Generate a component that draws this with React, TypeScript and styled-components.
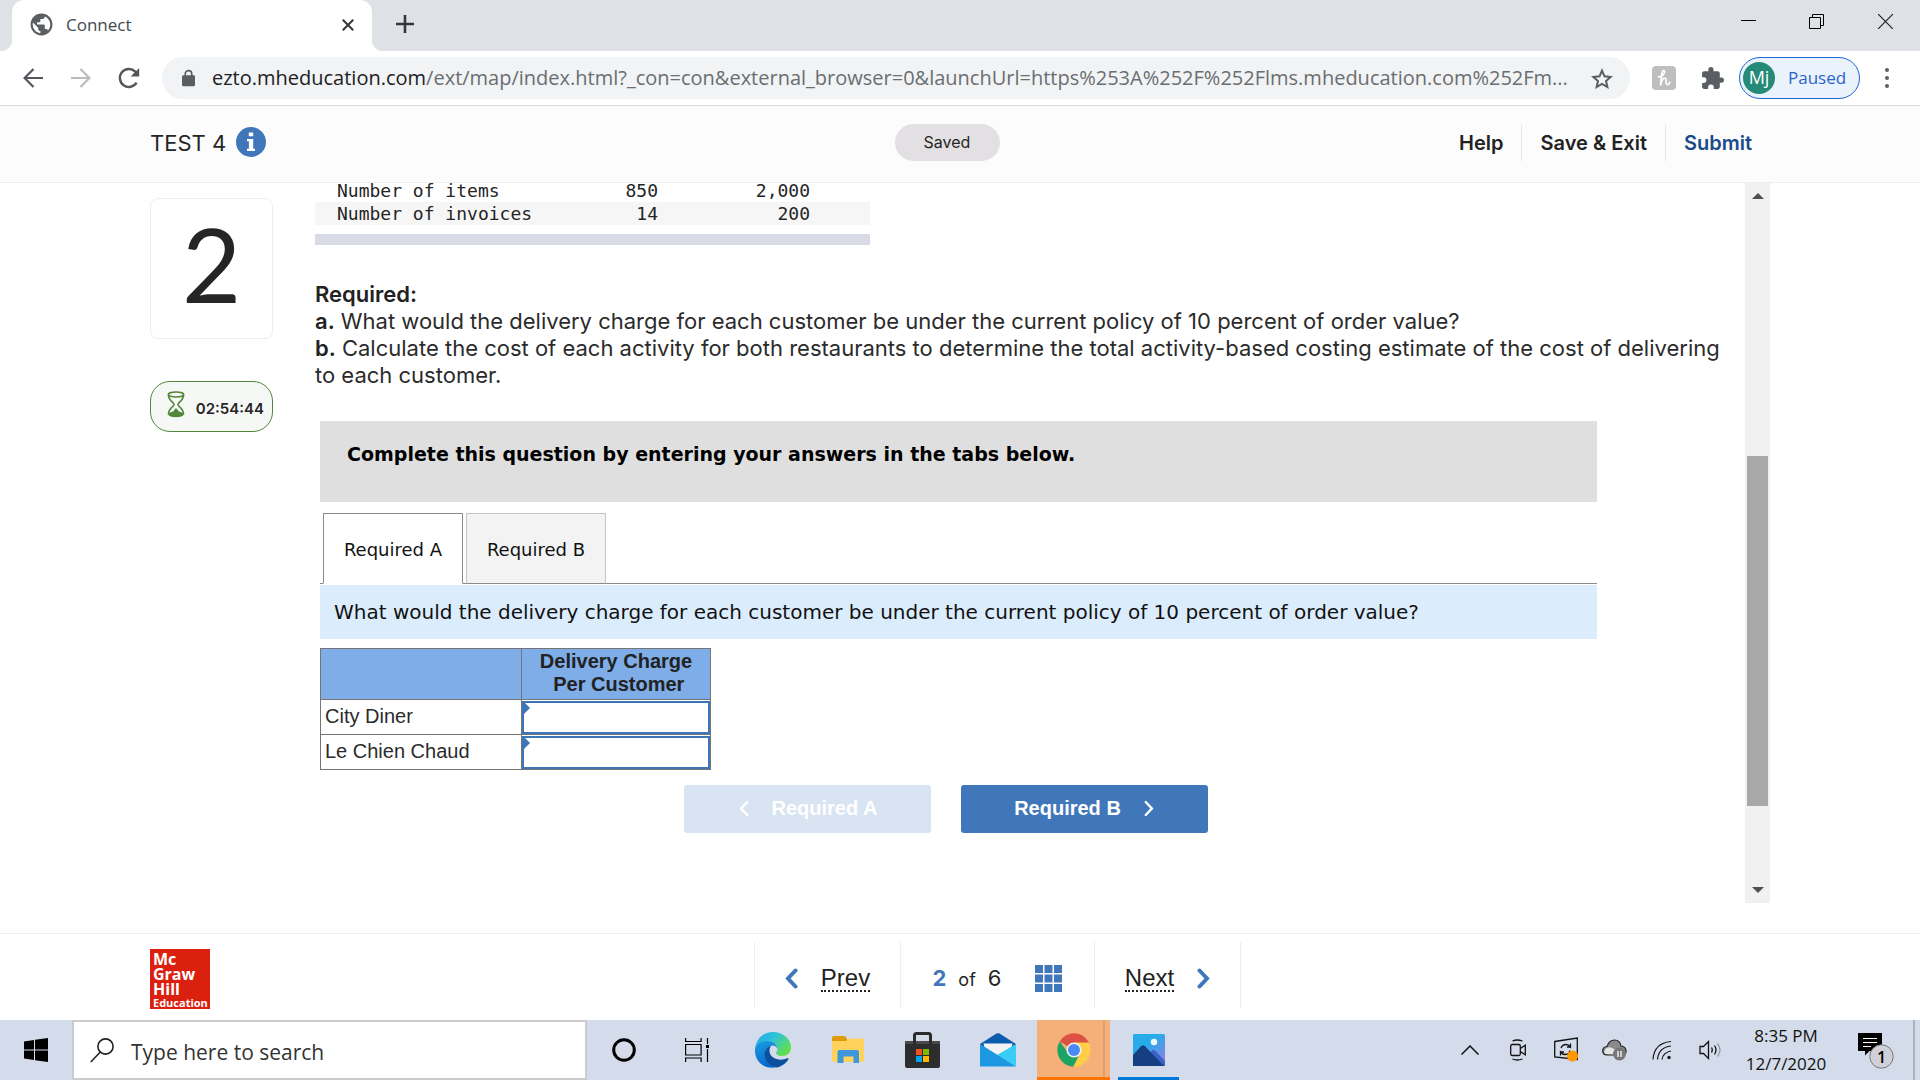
import React, { useState } from 'react';
import styled, { createGlobalStyle } from 'styled-components';

const segoe = '"Open Sans", "Noto Sans", sans-serif';
const proxima = 'Inter, "Open Sans", sans-serif';
const arial = '"Liberation Sans", Arial, sans-serif';
const verdana = '"DejaVu Sans", Verdana, sans-serif';
const mono = '"DejaVu Sans Mono", monospace';

const Global = createGlobalStyle`
  *, *::before, *::after { box-sizing: border-box; }
  body { margin: 0; background: #fff; color: #252525; font-family: ${proxima}; }
  button { font: inherit; color: inherit; background: none; border: 0; padding: 0; cursor: pointer; }
  a { color: inherit; text-decoration: none; }
  svg { display: block; flex: none; }
  h1, h2, p, dl, dd { margin: 0; }
`;

const Page = styled.div`
  display: flex;
  flex-direction: column;
  height: 100vh;
  overflow: hidden;
`;

/* ---------- browser chrome ---------- */

const TabStrip = styled.div`
  display: flex;
  flex: none;
  height: 51px;
  padding-left: 12px;
  background: #dee1e6;
`;

const BrowserTab = styled.div`
  position: relative;
  display: flex;
  align-items: center;
  width: 360px;
  padding: 0 16px 2px 18px;
  background: #fff;
  border-radius: 12px 12px 0 0;
  font: 17px/24px ${segoe};
  color: #45494d;
  &::before, &::after {
    content: '';
    position: absolute;
    bottom: 0;
    width: 12px;
    height: 12px;
  }
  &::before { right: 100%; background: radial-gradient(circle at 0 0, #dee1e6 12px, #fff 13px); }
  &::after { left: 100%; background: radial-gradient(circle at 100% 0, #dee1e6 12px, #fff 13px); }
`;

const TabTitle = styled.span`
  flex: 1;
  margin-left: 13px;
`;

const IconButton = styled.button<{ $w?: number }>`
  display: flex;
  flex: none;
  align-items: center;
  justify-content: center;
  width: ${(p) => p.$w ?? 48}px;
  height: 42px;
`;

const NewTab = styled(IconButton)`
  margin-left: 9px;
  height: 48px;
`;

const WindowControls = styled.div`
  display: flex;
  margin-left: auto;
`;

const Toolbar = styled.div`
  display: flex;
  flex: none;
  align-items: center;
  height: 55px;
  padding: 0 9px;
  border-bottom: 1px solid #d8dadd;
`;

const Omnibox = styled.div`
  display: flex;
  flex: 1;
  min-width: 0;
  align-items: center;
  height: 42px;
  margin: 0 11px 0 9px;
  padding: 0 4px 0 20px;
  background: #f1f3f4;
  border-radius: 21px;
`;

const Url = styled.div`
  flex: 1;
  min-width: 0;
  margin-left: 17px;
  white-space: nowrap;
  font: 20px/28px ${segoe};
  color: #6a6e72;
  b { font-weight: 400; color: #202124; }
`;

const Profile = styled.button`
  display: flex;
  align-items: center;
  width: 121px;
  height: 42px;
  margin: 0 3px 0 2px;
  padding: 0 3px;
  background: #eaf2fb;
  border: 1px solid #1f66d8;
  border-radius: 21px;
  font: 17px/24px ${segoe};
  color: #2a62cf;
`;

const Avatar = styled.span`
  width: 32px;
  height: 32px;
  margin-right: 13px;
  background: #268a79;
  border-radius: 50%;
  font: 18px/31px ${segoe};
  color: #fff;
`;

/* ---------- assessment header ---------- */

const Header = styled.header`
  display: grid;
  grid-template-columns: 1fr auto 1fr;
  flex: none;
  align-items: center;
  height: 77px;
  padding: 0 150px 4px;
  background: #fcfcfc;
  border-bottom: 1px solid #eee;
`;

const TestTitle = styled.div`
  display: flex;
  align-items: center;
  gap: 10px;
  h1 { padding-top: 1px; font: 400 22px/30px ${proxima}; color: #252525; }
`;

const Saved = styled.div`
  width: 105px;
  margin-right: 26px;
  background: #e2e0e2;
  border-radius: 19px;
  text-align: center;
  font: 16px/37px ${proxima};
`;

const HeaderNav = styled.nav`
  display: flex;
  justify-content: flex-end;
`;

const HeaderLink = styled.a<{ $primary?: boolean }>`
  padding: 1px 18px 0;
  border-left: 1px solid #e6e6e6;
  font: 600 20px/36px ${proxima};
  color: ${(p) => (p.$primary ? '#1b4a8a' : '#222')};
  &:first-child { border-left: 0; }
`;

/* ---------- question area ---------- */

const Main = styled.main`
  display: flex;
  flex: 1;
  min-height: 0;
  margin: 0 150px 30px;
`;

const Sidebar = styled.aside`
  flex: none;
  width: 123px;
  margin-right: 42px;
  padding-top: 15px;
`;

const QuestionNumber = styled.h2`
  height: 141px;
  border: 1px solid #eee;
  border-radius: 8px;
  text-align: center;
  font: 400 102px/130px Lato, sans-serif;
  color: #252525;
`;

const Timer = styled.div`
  display: flex;
  align-items: center;
  justify-content: space-between;
  height: 51px;
  margin-top: 42px;
  padding: 0 8px 0 16px;
  background: #f6f8f6;
  border: 1px solid #53863d;
  border-radius: 20px;
  font: 600 15px/24px ${proxima};
  svg { margin-bottom: 5px; }
  span { padding-top: 4px; }
`;

const Question = styled.section`
  flex: 1;
  min-width: 0;
  overflow: hidden;
`;

const DataTable = styled.table`
  width: 555px;
  margin-top: -4px;
  border-collapse: collapse;
  font: 18px/23px ${mono};
  th, td { padding: 0; font-weight: 400; text-align: right; }
  th { width: 240px; padding-left: 22px; text-align: left; }
  td:nth-child(2) { width: 103px; }
  td:nth-child(3) { width: 152px; }
  tr:nth-child(2) { background: #f6f6f6; }
`;

const TableFoot = styled.div`
  width: 555px;
  height: 11px;
  margin-top: 9px;
  background: #d8dbe6;
`;

const Prompt = styled.div`
  margin-top: 36px;
  padding-right: 14px;
  font: 22px/27px ${proxima};
  color: #2b2b2b;
  b { font-weight: 600; color: #222; }
`;

const Worksheet = styled.div`
  margin: 32px 148px 0 5px;
`;

const Instruction = styled.p`
  height: 81px;
  padding: 20px 27px;
  background: #dfdfdf;
  font: bold 19px/27px ${verdana};
  color: #000;
`;

const Tabs = styled.div`
  display: flex;
  gap: 3px;
  margin-top: 11px;
  padding-left: 3px;
  border-bottom: 1px solid #8a8a8a;
`;

const Tab = styled.button<{ $active: boolean }>`
  width: 140px;
  height: 71px;
  margin-bottom: -1px;
  padding-top: 2px;
  background: ${(p) => (p.$active ? '#fff' : '#f3f3f3')};
  border: 1px solid ${(p) => (p.$active ? '#8a8a8a' : '#c4c4c4')};
  border-bottom-color: ${(p) => (p.$active ? '#fff' : '#8a8a8a')};
  font: 18px/24px ${verdana};
  color: #111;
`;

const TabPrompt = styled.p`
  margin-top: 1px;
  padding: 14px 16px 13px 14px;
  background: #dbedfc;
  font: 20px/27px ${verdana};
  color: #111;
`;

const AnswerTable = styled.table`
  margin-top: 9px;
  border-collapse: collapse;
  font: 20px/23px ${arial};
  color: #2b2b2b;
  th, td { height: 35px; padding: 0 4px; border: 1px solid #757575; }
  th { font-weight: 400; text-align: left; }
  thead th {
    height: 51px;
    padding: 0 0 3px;
    background: #7eade8;
    text-align: center;
    font-weight: 700;
    color: #222;
  }
  th:first-child { width: 201px; }
  th:last-child { width: 189px; }
  tbody th:first-child { padding-bottom: 1px; width: 201px; }
  td { padding: 0; }
`;

const Cell = styled.label`
  position: relative;
  display: block;
  &::before {
    content: '';
    position: absolute;
    left: 2px;
    top: 1px;
    border: 6px solid transparent;
    border-left-color: #3c75b8;
    border-right-width: 0;
  }
`;

const CellInput = styled.input`
  display: block;
  width: 100%;
  height: 33px;
  padding: 0 8px;
  background: #fff;
  border: 2px solid #3c75b8;
  outline: 0;
  font: 20px/24px ${arial};
`;

const StepButtons = styled.div`
  display: flex;
  justify-content: center;
  gap: 30px;
  margin-top: 15px;
  padding-right: 25px;
`;

const StepButton = styled.button`
  display: flex;
  align-items: center;
  justify-content: center;
  gap: 22px;
  width: 247px;
  height: 48px;
  padding-bottom: 2px;
  background: #3f77ba;
  border-radius: 3px;
  font: bold 20px/24px ${arial};
  color: #fff;
  &:disabled { background: #d8e4f1; cursor: default; }
`;

const ScrollBar = styled.div`
  display: flex;
  flex: none;
  flex-direction: column;
  align-items: center;
  justify-content: space-between;
  width: 25px;
  padding: 10px 0;
  background: #f1f1f1;
`;

const ScrollTrack = styled.div`
  display: flex;
  flex: 1;
  flex-direction: column;
  padding: 257px 0 81px;
`;

const ScrollThumb = styled.div`
  flex: 1;
  width: 21px;
  background: #a8a8a8;
`;

/* ---------- footer ---------- */

const Footer = styled.footer`
  display: flex;
  flex: none;
  height: 87px;
  padding: 0 150px;
  border-top: 1px solid #eee;
`;

const Brand = styled.div`
  width: 60px;
  height: 60px;
  margin: 15px 544px 0 0;
  padding: 3px 0 0 3px;
  background: #dc2010;
  font: bold 16px/15px ${segoe};
  color: #fff;
  span { display: block; }
  small { display: block; font: bold 11px/11px ${segoe}; }
`;

const PagerCell = styled.div<{ $w: number; $last?: boolean }>`
  display: flex;
  align-items: center;
  justify-content: center;
  width: ${(p) => p.$w}px;
  height: 66px;
  margin-top: 8px;
  padding-top: 6px;
  border-left: 1px solid #eee;
  border-right: ${(p) => (p.$last ? 1 : 0)}px solid #eee;
`;

const PagerLink = styled.a`
  display: flex;
  align-items: center;
  gap: 23px;
  font: 24px/25px ${arial};
  color: #222;
  span { padding-top: 1px; border-bottom: 2px dotted #222; }
`;

const Count = styled.div`
  display: flex;
  align-items: baseline;
  gap: 12px;
  margin-right: 34px;
  padding-top: 1px;
  font: 22px/28px ${proxima};
  b { color: #3f77ba; }
  span { font-size: 18px; }
`;

/* ---------- taskbar ---------- */

const Taskbar = styled.div`
  display: flex;
  flex: none;
  align-items: center;
  height: 60px;
  background: #d4dbea;
`;

const Search = styled.label`
  display: flex;
  align-items: center;
  gap: 17px;
  width: 515px;
  height: 60px;
  padding-left: 16px;
  background: #fff;
  border: 2px solid #ccc;
`;

const SearchInput = styled.input`
  flex: 1;
  min-width: 0;
  padding: 3px 0 0;
  background: none;
  border: 0;
  outline: 0;
  font: 21px/28px ${segoe};
  &::placeholder { color: #333; opacity: 1; }
`;

const AppButton = styled.button<{ $w?: number; $tone?: 'hot' | 'open' }>`
  display: flex;
  flex: none;
  align-items: center;
  justify-content: center;
  width: ${(p) => (p.$tone === 'hot' ? 73 : p.$tone === 'open' ? 61 : p.$w ?? 75)}px;
  height: 60px;
  margin: ${(p) => (p.$tone === 'open' ? '0 7px 0 8px' : p.$tone === 'hot' ? '0 0 0 2px' : '0')};
  padding-top: 3px;
  background: ${(p) => (p.$tone === 'hot' ? '#f5b07a' : 'none')};
  border-bottom: 3px solid ${(p) => (p.$tone === 'hot' ? '#ff7300' : p.$tone === 'open' ? '#0078d7' : 'transparent')};
  box-shadow: ${(p) => (p.$tone === 'hot' ? 'inset -5px 0 #f5b07a, inset -7px 0 #e09f70' : 'none')};
`;

const Tray = styled.div`
  display: flex;
  align-items: center;
  height: 60px;
  margin-left: auto;
`;

const Clock = styled.time`
  width: 104px;
  text-align: center;
  font: 17px/28px ${segoe};
  color: #111;
  span { display: block; }
`;

const ShowDesktop = styled.div`
  width: 7px;
  height: 60px;
  border-left: 2px solid #aab1bf;
`;

const Chevron = ({ left, w = 13, h = 21, color = '#3f77ba', sw = 4 }: { left?: boolean; w?: number; h?: number; color?: string; sw?: number }) => (
  <svg width={w} height={h} viewBox="0 0 13 21" fill="none" stroke={color} strokeWidth={sw} strokeLinecap="round">
    <path d={left ? 'M10.500 2.500L3 10.500l7.500 8' : 'M2.500 2.500L10 10.500l-7.500 8'} />
  </svg>
);

const Globe = () => (
  <svg width="23" height="23" viewBox="1.500 1.500 21 21">
    <path fill="#5a5e62" d="M12 2C6.480 2 2 6.480 2 12s4.480 10 10 10 10-4.480 10-10S17.520 2 12 2zm-1 17.930c-3.950-.49-7-3.850-7-7.930 0-.62.08-1.210.21-1.790L9 15v1c0 1.100.9 2 2 2v1.930zm6.900-2.540c-.26-.81-1-1.390-1.900-1.390h-1v-3c0-.55-.45-1-1-1H8v-2h2c.55 0 1-.45 1-1V7h2c1.100 0 2-.9 2-2v-.41c2.930 1.190 5 4.060 5 7.410 0 2.080-.8 3.970-2.100 5.390z" />
  </svg>
);

export default function App() {
  const [tab, setTab] = useState<'A' | 'B'>('A');
  return (
    <Page>
      <Global />
      <TabStrip>
        <BrowserTab>
          <Globe />
          <TabTitle>Connect</TabTitle>
          <IconButton $w={16} aria-label="Close tab">
            <svg width="12" height="12" viewBox="0 0 12 12" stroke="#33373a" strokeWidth="2"><path d="M.8.8l10.400 10.400M11.200.8L.8 11.200" /></svg>
          </IconButton>
        </BrowserTab>
        <NewTab aria-label="New tab">
          <svg width="18" height="18" viewBox="0 0 18 18" stroke="#33373a" strokeWidth="2.600"><path d="M9 0v18M0 9h18" /></svg>
        </NewTab>
        <WindowControls>
          <IconButton $w={68} aria-label="Minimize">
            <svg width="15" height="15" viewBox="0 0 15 15"><path d="M0 6.500h15" stroke="#000" /></svg>
          </IconButton>
          <IconButton $w={68} aria-label="Restore">
            <svg width="15" height="15" viewBox="0 0 15 15" fill="none" stroke="#000"><path d="M.5 3.500h11v11H.5zM3.500 3.500v-3h11v11h-3" /></svg>
          </IconButton>
          <IconButton $w={70} aria-label="Close">
            <svg width="15" height="15" viewBox="0 0 15 15" stroke="#222" strokeWidth="1.200"><path d="M0 0l15 15M15 0L0 15" /></svg>
          </IconButton>
        </WindowControls>
      </TabStrip>

      <Toolbar>
        <IconButton aria-label="Back">
          <svg width="20" height="20" viewBox="0 0 20 20" fill="none" stroke="#54585c" strokeWidth="2.200"><path d="M20 10H2M10.500 1L1.600 10l8.900 9" /></svg>
        </IconButton>
        <IconButton aria-label="Forward">
          <svg width="20" height="20" viewBox="0 0 20 20" fill="none" stroke="#babcbe" strokeWidth="2.200"><path d="M0 10h18M9.500 1l8.900 9-8.900 9" /></svg>
        </IconButton>
        <IconButton aria-label="Reload">
          <svg width="22" height="22" viewBox="0 0 22 22" fill="none" stroke="#54585c" strokeWidth="2.400">
            <path d="M18.600 15.600A9 9 0 1 1 17.300 4.600l1.600 1.700" />
            <path d="M21.200 1v8.600h-8.600z" fill="#54585c" stroke="none" />
          </svg>
        </IconButton>
        <Omnibox>
          <svg width="13" height="18" viewBox="0 0 14 18"><rect y="6" width="14" height="12" rx="1.500" fill="#5a5e62" /><path d="M3.500 7V4.500a3.500 3.500 0 0 1 7 0V7" fill="none" stroke="#5a5e62" strokeWidth="1.800" /></svg>
          <Url>
            <b>ezto.mheducation.com</b>/ext/map/index.html?_con=con&amp;external_browser=0&amp;launchUrl=https%253A%252F%252Flms.mheducation.com%252Fm...
          </Url>
          <IconButton aria-label="Bookmark this page">
            <svg width="22" height="21" viewBox="0 0 22 21" fill="none" stroke="#5a5e62" strokeWidth="2"><path d="M11 2.600l2.500 5.700 6.100.6-4.600 4.100 1.400 6L11 15.800 5.600 19 7 13 2.400 8.900l6.100-.6z" /></svg>
          </IconButton>
        </Omnibox>
        <IconButton $w={46} aria-label="Honey">
          <svg width="24" height="24" viewBox="0 0 24 24">
            <rect width="24" height="24" rx="4" fill="#bfbfbf" />
            <path d="M6.500 11C10 10.500 13 8 12.600 5.500c-.3-1.600-2-1.200-2.500.8C9.200 10 9.200 14 8.600 19.500c.8-4.500 2.400-7.500 4.200-7.500 2.400 0 .2 6 2.200 6.500 1.300.3 2.400-1 2.900-2.300" fill="none" stroke="#fff" strokeWidth="1.700" strokeLinecap="round" />
          </svg>
        </IconButton>
        <IconButton $w={50} aria-label="Extensions">
          <svg width="25" height="25" viewBox="0 0 24 24" fill="#5a5e62"><path d="M20.500 11H19V7c0-1.100-.9-2-2-2h-4V3.500a2.500 2.500 0 0 0-5 0V5H4c-1.100 0-2 .9-2 2v3.800h1.500a2.700 2.700 0 0 1 0 5.400H2V20c0 1.100.9 2 2 2h3.800v-1.500a2.700 2.700 0 0 1 5.400 0V22H17c1.100 0 2-.9 2-2v-4h1.500a2.500 2.500 0 0 0 0-5z" /></svg>
        </IconButton>
        <Profile>
          <Avatar>Mj</Avatar>Paused
        </Profile>
        <IconButton aria-label="Browser menu">
          <svg width="4" height="20" viewBox="0 0 4 20" fill="#5a5e62"><circle cx="2" cy="2" r="2" /><circle cx="2" cy="10" r="2" /><circle cx="2" cy="18" r="2" /></svg>
        </IconButton>
      </Toolbar>

      <Header>
        <TestTitle>
          <h1>TEST 4</h1>
          <svg width="30" height="30" viewBox="0 0 30 30" role="img" aria-label="Information">
            <circle cx="15" cy="15" r="15" fill="#3f77ba" />
            <path d="M12.800 5.500h4.400v3.800h-4.400zM11 12h6.200v9.800H19V24h-8v-2.200h1.900v-7.600H11z" fill="#fff" />
          </svg>
        </TestTitle>
        <Saved role="status">Saved</Saved>
        <HeaderNav>
          <HeaderLink href="#help">Help</HeaderLink>
          <HeaderLink href="#exit">Save &amp; Exit</HeaderLink>
          <HeaderLink href="#submit" $primary>Submit</HeaderLink>
        </HeaderNav>
      </Header>

      <Main>
        <Sidebar>
          <QuestionNumber>2</QuestionNumber>
          <Timer>
            <svg width="18" height="27" viewBox="0 0 18 27" fill="none" stroke="#53863d" strokeWidth="1.600">
              <ellipse cx="9" cy="3.500" rx="7.600" ry="2.500" />
              <path d="M1.400 3.500C1.400 10 7 11 7 13.500S1.400 17 1.400 23.500M16.600 3.500C16.600 10 11 11 11 13.500s5.600 3.500 5.600 10" />
              <path d="M9 17l3 3.500 4.600 1.500v2c-2 3-13.200 3-15.200 0v-2L6 20.500z" fill="#53863d" stroke="none" />
            </svg>
            <span>02:54:44</span>
          </Timer>
        </Sidebar>

        <Question>
          <DataTable>
            <tbody>
              <tr><th scope="row">Number of items</th><td>850</td><td>2,000</td><td /></tr>
              <tr><th scope="row">Number of invoices</th><td>14</td><td>200</td><td /></tr>
            </tbody>
          </DataTable>
          <TableFoot />

          <Prompt>
            <p><b>Required:</b></p>
            <p><b>a.</b> What would the delivery charge for each customer be under the current policy of 10 percent of order value?</p>
            <p><b>b.</b> Calculate the cost of each activity for both restaurants to determine the total activity-based costing estimate of the cost of delivering to each customer.</p>
          </Prompt>

          <Worksheet>
            <Instruction>Complete this question by entering your answers in the tabs below.</Instruction>
            <Tabs role="tablist">
              <Tab role="tab" aria-selected={tab === 'A'} $active={tab === 'A'} onClick={() => setTab('A')}>Required A</Tab>
              <Tab role="tab" aria-selected={tab === 'B'} $active={tab === 'B'} onClick={() => setTab('B')}>Required B</Tab>
            </Tabs>
            <TabPrompt>What would the delivery charge for each customer be under the current policy of 10 percent of order value?</TabPrompt>
            <AnswerTable>
              <thead>
                <tr><th aria-label="Customer" /><th scope="col">Delivery Charge<br />&nbsp;Per Customer</th></tr>
              </thead>
              <tbody>
                {['City Diner', 'Le Chien Chaud'].map((name) => (
                  <tr key={name}>
                    <th scope="row">{name}</th>
                    <td><Cell><CellInput aria-label={`Delivery charge, ${name}`} /></Cell></td>
                  </tr>
                ))}
              </tbody>
            </AnswerTable>
            <StepButtons>
              <StepButton disabled={tab === 'A'} onClick={() => setTab('A')}><Chevron left w={12} h={17} color="#fff" sw={3} />Required A</StepButton>
              <StepButton disabled={tab === 'B'} onClick={() => setTab('B')}>Required B<Chevron w={12} h={17} color="#fff" sw={3} /></StepButton>
            </StepButtons>
          </Worksheet>
        </Question>

        <ScrollBar aria-hidden="true">
          <svg width="12" height="6" viewBox="0 0 12 6" fill="#505050"><path d="M6 0l6 6H0z" /></svg>
          <ScrollTrack><ScrollThumb /></ScrollTrack>
          <svg width="12" height="6" viewBox="0 0 12 6" fill="#505050"><path d="M6 6l6-6H0z" /></svg>
        </ScrollBar>
      </Main>

      <Footer>
        <Brand><span>Mc</span><span>Graw</span><span>Hill</span><small>Education</small></Brand>
        <PagerCell $w={146}>
          <PagerLink href="#prev"><Chevron left /><span>Prev</span></PagerLink>
        </PagerCell>
        <PagerCell $w={194}>
          <Count><b>2</b><span>of</span>6</Count>
          <IconButton $w={27} aria-label="Question list">
            <svg width="27" height="27" viewBox="0 0 27 27" fill="#3f77ba"><path d="M0 0h8v8H0zM9.500 0h8v8h-8zM19 0h8v8h-8zM0 9.500h8v8H0zM9.500 9.500h8v8h-8zM19 9.500h8v8h-8zM0 19h8v8H0zM9.500 19h8v8h-8zM19 19h8v8h-8z" /></svg>
          </IconButton>
        </PagerCell>
        <PagerCell $w={147} $last>
          <PagerLink href="#next"><span>Next</span><Chevron /></PagerLink>
        </PagerCell>
      </Footer>

      <Taskbar>
        <IconButton $w={72} aria-label="Start">
          <svg width="24" height="24" viewBox="0 0 24 24"><path d="M0 3.400L10 2v9.500H0zM11 1.800L24 0v11.500H11zM0 12.500h10V22L0 20.600zM11 12.500h13V24l-13-1.800z" /></svg>
        </IconButton>
        <Search>
          <svg width="24" height="25" viewBox="0 0 24 25" fill="none" stroke="#222" strokeWidth="1.600"><circle cx="15.500" cy="8.500" r="7.600" /><path d="M10.300 14L.8 24" /></svg>
          <SearchInput placeholder="Type here to search" aria-label="Search" />
        </Search>
        <AppButton $w={74} aria-label="Cortana">
          <svg width="24" height="24" viewBox="0 0 24 24"><circle cx="12" cy="12" r="10.300" fill="none" stroke="#000" strokeWidth="3" /></svg>
        </AppButton>
        <AppButton $w={74} aria-label="Task view">
          <svg width="26" height="24" viewBox="0 0 26 24" fill="none" stroke="#000" strokeWidth="1.200"><path d="M.6 0v3.500h15.500V0M.6 6.500h15.500v10.500H.6zM.6 24v-4h15.500v4M22.500 0v6M22.500 11v13" /><path d="M21 7h3v3h-3z" fill="#000" stroke="none" /></svg>
        </AppButton>
        <AppButton aria-label="Microsoft Edge">
          <svg width="36" height="36" viewBox="0 0 36 36">
            <defs>
              <linearGradient id="edgeTop" x1="0" y1="0" x2="1" y2=".6"><stop offset="0" stopColor="#1fa5ee" /><stop offset=".5" stopColor="#2fc3d6" /><stop offset="1" stopColor="#62e04c" /></linearGradient>
              <linearGradient id="edgeLow" x1="0" y1="0" x2=".4" y2="1"><stop offset="0" stopColor="#1c9fdd" /><stop offset="1" stopColor="#0767d0" /></linearGradient>
            </defs>
            <path d="M0 17C1 7 8 0 18 0c10 0 18 7 18 15 0 6-4 9-9 9-4 0-6-1.500-6-3 0-1 1.500-2 1.500-4 0-4-4-7.500-10-7.500C6 9.500 1 13 0 17z" fill="url(#edgeTop)" />
            <path d="M0 17c1-5 6-8 12-8 5 0 10 3 10.500 7.500C21 14 18 13 16 14c-5 2-7 7-5 12 1.500 5 5 8.500 9 9.500C8 37.500-1 28 0 17z" fill="url(#edgeLow)" />
            <path d="M16 14c-6 2-8 8-5 14 3 6 9 9 14 6.500 4-1.500 7-4.500 8.500-7.500.3-.7-.3-1-1-.7-8 3.500-18 0-18-7.300 0-2 .5-3.800 1.500-5z" fill="#0c4f9c" />
          </svg>
        </AppButton>
        <AppButton aria-label="File Explorer">
          <svg width="32" height="28" viewBox="0 0 32 28"><path d="M0 2Q0 0 2 0h10q2 0 2.500 2L16 6H0z" fill="#dd9b07" /><path d="M0 5h14l2.500-2.500H30q2 0 2 2V24q0 2-2 2H2q-2 0-2-2z" fill="#ffd35b" /><path d="M5.500 27V16q0-2 2-2H25q2 0 2 2v11h-5.500v-6.500h-10V27z" fill="#3c97dc" /></svg>
        </AppButton>
        <AppButton aria-label="Microsoft Store">
          <svg width="35" height="36" viewBox="0 0 35 36"><path d="M9.500 12V3.500q0-2 2-2h12q2 0 2 2V12" fill="none" stroke="#2b2b2b" strokeWidth="3" /><path d="M0 9h35v25q0 2-2 2H2q-2 0-2-2z" fill="#2d2d2d" /><path d="M0 9h35v3H0z" fill="#4a4a4a" /><path d="M9.500 12V9M25.500 12V9" stroke="#2b2b2b" strokeWidth="3" /><path d="M11 17h6v6h-6z" fill="#f25022" /><path d="M18 17h6v6h-6z" fill="#7fba00" /><path d="M11 24h6v6h-6z" fill="#00a4ef" /><path d="M18 24h6v6h-6z" fill="#ffb900" /></svg>
        </AppButton>
        <AppButton aria-label="Mail">
          <svg width="36" height="34" viewBox="0 0 36 34"><path d="M0 11L16.500.6q1.500-.9 3 0L36 11 34 17H2z" fill="#0b5cad" /><path d="M3.500 10.500h29L31 17 18 24 5 17z" fill="#f3f3f3" /><path d="M36 11v22.500L17 22z" fill="#3accf6" /><path d="M0 11l36 22.500H0z" fill="#1d97e2" /></svg>
        </AppButton>
        <AppButton aria-label="Google Chrome" $tone="hot">
          <svg width="34" height="34" viewBox="0 0 34 34">
            <path d="M17 17L2.700 8.500a16.600 16.600 0 0 1 28.600 0z" fill="#dd5144" />
            <path d="M17 17h-8L2.700 8.500A16.600 16.600 0 0 0 16.500 33.600L21 24z" fill="#1da462" />
            <path d="M17 9h14.500A16.600 16.600 0 0 1 16.500 33.600L23.500 21z" fill="#ffcd46" />
            <path d="M17 9.500h15L31.200 8.400H17z" fill="#dd5144" />
            <circle cx="17" cy="17" r="7.600" fill="#f1f1f1" /><circle cx="17" cy="17" r="6" fill="#4a8af4" />
          </svg>
        </AppButton>
        <AppButton aria-label="Photos" $tone="open">
          <svg width="32" height="32" viewBox="0 0 32 32">
            <defs><linearGradient id="sky" x1="0" y1="0" x2="1" y2="1"><stop offset=".4" stopColor="#27abea" /><stop offset="1" stopColor="#9c7be0" /></linearGradient></defs>
            <rect width="32" height="32" rx="1.500" fill="url(#sky)" /><circle cx="21" cy="8" r="3.200" fill="#f4f7fa" />
            <path d="M10 32l8.500-15q2-2.500 4 0L32 27v5z" fill="#3a62c8" /><path d="M0 21L8 12.200q2-2 4 0L31 32H0z" fill="#163f82" />
          </svg>
        </AppButton>

        <Tray>
          <IconButton aria-label="Show hidden icons">
            <svg width="18" height="10" viewBox="0 0 18 10" fill="none" stroke="#111" strokeWidth="1.500"><path d="M.5 9.500L9 1l8.500 8.500" /></svg>
          </IconButton>
          <IconButton aria-label="Meet now">
            <svg width="16" height="24" viewBox="0 0 16 24" fill="none" stroke="#111" strokeWidth="1.300"><rect x=".7" y="6.500" width="9.600" height="11" rx="1.500" /><path d="M10.300 10.500l5-3.200v9.400l-5-3.200M2.500 3q4.500-2 10 0M2.500 21q4.500 2 10 0" /></svg>
          </IconButton>
          <IconButton aria-label="Windows Update">
            <svg width="24" height="26" viewBox="0 0 24 26" fill="none" stroke="#111" strokeWidth="1.300"><path d="M.7 4.500L23.300 1v21.500L.7 20z" /><path d="M7 11q1.500-3.500 5-3.500 2.500 0 4.500 2.500V6.500M16.500 10H13M16 13.500q-1 4-5 4-2.500 0-4.500-2.500v3.500M6.500 15H10" /><circle cx="18.500" cy="19" r="5.500" fill="#ff9800" stroke="none" /></svg>
          </IconButton>
          <IconButton aria-label="OneDrive">
            <svg width="25" height="22" viewBox="0 0 25 22"><path d="M5 16Q.7 15.500.7 11.700T5 7.500Q7 1 12.500 1t6.500 6q4.500.5 5 4.500t-4 4.500z" fill="#8b8b8b" stroke="#222" strokeWidth="1.200" /><path d="M3 15q-2-3 1.500-6Q8 7 12 10l4 5.500z" fill="#e4e4e4" /><circle cx="17.500" cy="15" r="6.500" fill="#777" /><path d="M16 12v6M19 12v6" stroke="#fff" strokeWidth="1.300" /></svg>
          </IconButton>
          <IconButton aria-label="Network">
            <svg width="20" height="20" viewBox="0 0 20 20" fill="none" stroke="#111" strokeWidth="1.200"><path d="M1 19.500Q2 3 19 1.500M5.500 19.500Q6.500 7.500 19 6M10 19.500q1-7 9-8.500" /><circle cx="17" cy="17.500" r="1.700" fill="#111" stroke="none" /></svg>
          </IconButton>
          <IconButton aria-label="Volume">
            <svg width="23" height="20" viewBox="0 0 23 20" fill="none" stroke="#111" strokeWidth="1.300"><path d="M1 6.500h3.500L9.500 1.500v17L4.500 13.500H1zM12.500 7.500q1.500 2.500 0 5M15.500 5.500q3 4.500 0 9" /><path d="M18.500 3.500q5 6.500 0 13" stroke="#999" /></svg>
          </IconButton>
          <Clock><span>8:35 PM</span><span>12/7/2020</span></Clock>
          <IconButton $w={75} aria-label="1 notification">
            <svg width="37" height="38" viewBox="0 0 37 38">
              <path d="M1 2h24v18H12.500L8 24.500V20H1z" />
              <path d="M6 7.500h14M6 11.500h14M6 15.500h8" stroke="#fff" />
              <circle cx="24.500" cy="25.500" r="11.700" fill="#cfd1d6" stroke="#777" />
              <text x="24.500" y="31.500" textAnchor="middle" fontFamily="Open Sans" fontSize="16" fontWeight="600">1</text>
            </svg>
          </IconButton>
          <ShowDesktop />
        </Tray>
      </Taskbar>
    </Page>
  );
}
